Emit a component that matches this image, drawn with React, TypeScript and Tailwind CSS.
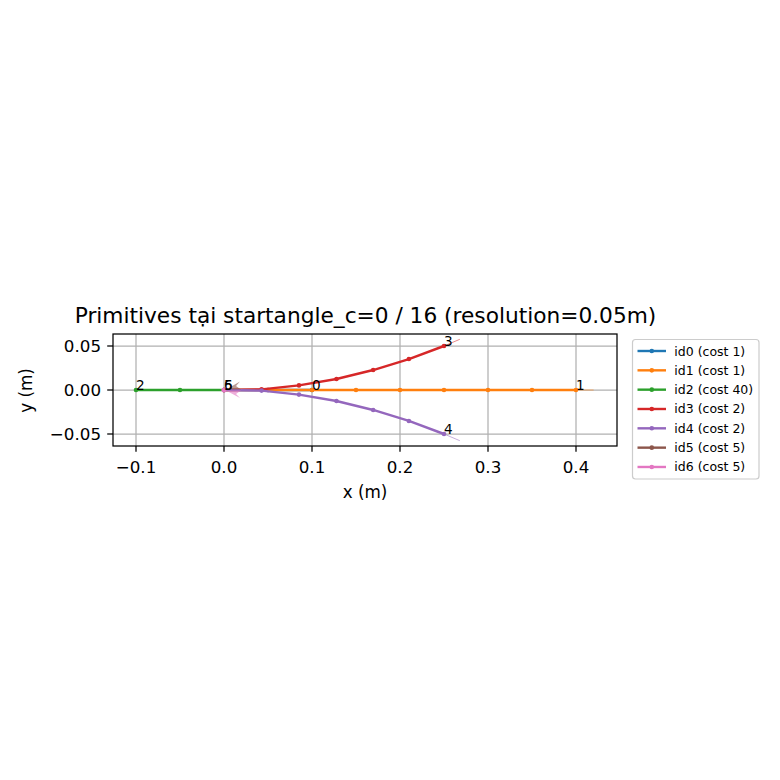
const X0 = 224;
const Y0 = 390;
const S = 880; // px per metre

const px = (x: number) => X0 + x * S;
const py = (y: number) => Y0 - y * S;

const C = {
  blue: '#1f77b4',
  orange: '#ff7f0e',
  green: '#2ca02c',
  red: '#d62728',
  purple: '#9467bd',
  brown: '#8c564b',
  pink: '#e377c2',
};

const curve = [
  [0, 0],
  [0.0427, 0.0007],
  [0.0852, 0.0052],
  [0.1278, 0.0125],
  [0.1695, 0.0227],
  [0.2101, 0.0352],
  [0.25, 0.05],
];

type Prim = { color: string; pts: number[][]; label: string; end: number[]; head: number[] };

const prims: Prim[] = [
  { color: C.blue, pts: [[0, 0], [0.05, 0], [0.1, 0]], label: '0', end: [0.1, 0], head: [0.12, 0] },
  {
    color: C.orange,
    pts: [0, 0.05, 0.1, 0.15, 0.2, 0.25, 0.3, 0.35, 0.4].map((x) => [x, 0]),
    label: '1',
    end: [0.4, 0],
    head: [0.42, 0],
  },
  { color: C.green, pts: [[0, 0], [-0.05, 0], [-0.1, 0]], label: '2', end: [-0.1, 0], head: [-0.08, 0] },
  { color: C.red, pts: curve, label: '3', end: [0.25, 0.05], head: [0.268, 0.0576] },
  { color: C.purple, pts: curve.map(([x, y]) => [x, -y]), label: '4', end: [0.25, -0.05], head: [0.268, -0.0576] },
  { color: C.brown, pts: [[0, 0]], label: '5', end: [0, 0], head: [0, 0] },
  { color: C.pink, pts: [[0, 0]], label: '6', end: [0, 0], head: [0, 0] },
];

const legend = [
  { color: C.blue, text: 'id0 (cost 1)' },
  { color: C.orange, text: 'id1 (cost 1)' },
  { color: C.green, text: 'id2 (cost 40)' },
  { color: C.red, text: 'id3 (cost 2)' },
  { color: C.purple, text: 'id4 (cost 2)' },
  { color: C.brown, text: 'id5 (cost 5)' },
  { color: C.pink, text: 'id6 (cost 5)' },
];

const xTicks = [
  { v: -0.1, t: '−0.1' },
  { v: 0, t: '0.0' },
  { v: 0.1, t: '0.1' },
  { v: 0.2, t: '0.2' },
  { v: 0.3, t: '0.3' },
  { v: 0.4, t: '0.4' },
];
const yTicks = [
  { v: 0.05, t: '0.05' },
  { v: 0, t: '0.00' },
  { v: -0.05, t: '−0.05' },
];

const L = 113;
const R = 617;
const T = 334;
const B = 446;

function Chart() {
  return (
    <svg width={780} height={780} viewBox="0 0 780 780" className="block" fontFamily="'DejaVu Sans', 'Liberation Sans', sans-serif">
      <rect x={0} y={0} width={780} height={780} fill="#ffffff" />

      <text x={365.5} y={323} textAnchor="middle" fontSize={21.7} fill="#000">
        Primitives tại startangle_c=0 / 16 (resolution=0.05m)
      </text>

      <defs>
        <clipPath id="plot">
          <rect x={L} y={T} width={R - L} height={B - T} />
        </clipPath>
      </defs>

      {/* grid */}
      <g stroke="#b0b0b0" strokeWidth={1.25}>
        {xTicks.map((t) => (
          <line key={t.t} x1={px(t.v)} x2={px(t.v)} y1={T} y2={B} />
        ))}
        {yTicks.map((t) => (
          <line key={t.t} x1={L} x2={R} y1={py(t.v)} y2={py(t.v)} />
        ))}
      </g>

      <g clipPath="url(#plot)">
        {prims.map((p) => (
          <g key={p.label}>
            {p.pts.length > 1 && (
              <polyline
                points={p.pts.map(([x, y]) => `${px(x)},${py(y)}`).join(' ')}
                fill="none"
                stroke={p.color}
                strokeWidth={2.4}
                strokeLinejoin="round"
              />
            )}
            {p.pts.map(([x, y], i) => (
              <circle key={i} cx={px(x)} cy={py(y)} r={2.3} fill={p.color} />
            ))}
            {p.pts.length > 1 && (
              <line
                x1={px(p.end[0])}
                y1={py(p.end[1])}
                x2={px(p.head[0])}
                y2={py(p.head[1])}
                stroke={p.color}
                strokeOpacity={0.55}
                strokeWidth={1}
              />
            )}
          </g>
        ))}

        {/* in-place rotation headings */}
        <polygon points="226,389.5 240,381.5 236,386 241,389.5" fill={C.brown} fillOpacity={0.6} />
        <polygon points="226,390.5 241,390.5 236,394 240,398" fill={C.pink} fillOpacity={0.6} />
        <circle cx={224} cy={390} r={2.5} fill={C.pink} />

        {prims.map((p) => (
          <text key={p.label} x={px(p.end[0])} y={py(p.end[1])} fontSize={13.6} fill="#000">
            {p.label}
          </text>
        ))}
      </g>

      {/* spines */}
      <rect x={L} y={T} width={R - L} height={B - T} fill="none" stroke="#000" strokeWidth={1.25} />

      {/* x ticks */}
      {xTicks.map((t) => (
        <g key={t.t}>
          <line x1={px(t.v)} x2={px(t.v)} y1={B} y2={B + 5.8} stroke="#000" strokeWidth={1.25} />
          <text x={px(t.v)} y={473} textAnchor="middle" fontSize={16.7} fill="#000">
            {t.t}
          </text>
        </g>
      ))}

      {/* y ticks */}
      {yTicks.map((t) => (
        <g key={t.t}>
          <line x1={L} x2={L - 5.8} y1={py(t.v)} y2={py(t.v)} stroke="#000" strokeWidth={1.25} />
          <text x={101} y={py(t.v) + 6.1} textAnchor="end" fontSize={16.7} fill="#000">
            {t.t}
          </text>
        </g>
      ))}

      <text x={365} y={498} textAnchor="middle" fontSize={16.8} fill="#000">
        x (m)
      </text>
      <text x={0} y={0} transform="translate(32 390.5) rotate(-90)" textAnchor="middle" fontSize={16.8} fill="#000">
        y (m)
      </text>

      {/* legend */}
      <rect x={632.5} y={339.5} width={126.5} height={139.5} rx={3} fill="#ffffff" fillOpacity={0.8} stroke="#cccccc" strokeWidth={1.2} />
      {legend.map((l, i) => {
        const y = 351 + i * 19.33;
        return (
          <g key={l.text}>
            <line x1={637.5} x2={666} y1={y} y2={y} stroke={l.color} strokeWidth={2.4} />
            <circle cx={651.8} cy={y} r={2.3} fill={l.color} />
            <text x={674.3} y={y + 4.5} fontSize={12.5} fill="#000">
              {l.text}
            </text>
          </g>
        );
      })}
    </svg>
  );
}

export default function App() {
  return (
    <div className="w-[780px] h-[780px] bg-white">
      <Chart />
    </div>
  );
}
